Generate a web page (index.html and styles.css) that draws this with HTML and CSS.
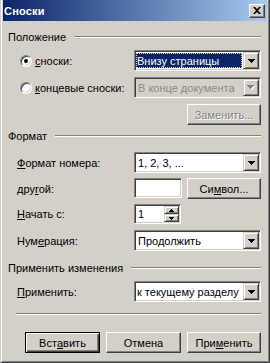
FILE: index.html
```html
<!DOCTYPE html>
<html lang="ru">
<head>
  <meta charset="UTF-8" />
  <title>Сноски</title>
  <link rel="stylesheet" href="styles.css">
</head>
<body>
<div class="window">
  <div class="titlebar">
    <span class="title">Сноски</span>
    <span class="close-btn">
      <svg width="8" height="7" viewBox="0 0 8 7"><path d="M0 0h2l2 2l2-2h2l-3 3.5l3 3.5h-2l-2-2l-2 2h-2l3-3.5z" fill="#000"/></svg>
    </span>
  </div>

  <div class="content">
    <div class="group-head head-pos"><span>Положение</span><i class="rule"></i></div>

    <div class="row row-1">
      <label class="radio"><span class="radio-box on"></span><span><u>с</u>носки:</span></label>
      <div class="combo">
        <span class="combo-text selected">Внизу страницы</span>
        <span class="drop"><svg width="7" height="4"><path d="M0 0h7v1h-1v1h-1v1h-1v1h-1v-1h-1v-1h-1v-1h-1z" fill="#000"/></svg></span>
      </div>
    </div>

    <div class="row row-2">
      <label class="radio"><span class="radio-box"></span><span><u>к</u>онцевые сноски:</span></label>
      <div class="combo disabled">
        <span class="combo-text">В конце документа</span>
        <span class="drop"><svg width="8" height="5"><path d="M1 1h7v1h-1v1h-1v1h-1v1h-1v-1h-1v-1h-1v-1h-1z" fill="#fff"/><path d="M0 0h7v1h-1v1h-1v1h-1v1h-1v-1h-1v-1h-1v-1h-1z" fill="#808080"/></svg></span>
      </div>
    </div>

    <div class="row row-3">
      <span></span>
      <div class="btn-line"><span class="btn disabled">Заменить...</span></div>
    </div>

    <div class="group-head head-fmt"><span>Формат</span><i class="rule"></i></div>

    <div class="row row-4">
      <span class="lbl"><u>Ф</u>ормат номера:</span>
      <div class="combo">
        <span class="combo-text">1, 2, 3, ...</span>
        <span class="drop"><svg width="7" height="4"><path d="M0 0h7v1h-1v1h-1v1h-1v1h-1v-1h-1v-1h-1v-1h-1z" fill="#000"/></svg></span>
      </div>
    </div>

    <div class="row row-5">
      <span class="lbl">дру<u>г</u>ой:</span>
      <div class="btn-line between">
        <span class="textbox"></span>
        <span class="btn">Си<u>м</u>вол...</span>
      </div>
    </div>

    <div class="row row-6">
      <span class="lbl"><u>Н</u>ачать с:</span>
      <div class="spin">
        <span class="spin-text">1</span>
        <span class="spin-btns">
          <span class="spin-btn"><svg width="5" height="3"><path d="M2 0h1v1h1v1h1v1h-5v-1h1v-1h1z" fill="#000"/></svg></span>
          <span class="spin-btn"><svg width="5" height="3"><path d="M0 0h5v1h-1v1h-1v1h-1v-1h-1v-1h-1z" fill="#000"/></svg></span>
        </span>
      </div>
    </div>

    <div class="row row-7">
      <span class="lbl">Нум<u>е</u>рация:</span>
      <div class="combo">
        <span class="combo-text">Продолжить</span>
        <span class="drop"><svg width="7" height="4"><path d="M0 0h7v1h-1v1h-1v1h-1v1h-1v-1h-1v-1h-1v-1h-1z" fill="#000"/></svg></span>
      </div>
    </div>

    <div class="group-head head-apply"><span>Применить изменения</span><i class="rule"></i></div>

    <div class="row row-8">
      <span class="lbl"><u>П</u>рименить:</span>
      <div class="combo">
        <span class="combo-text tight">к текущему разделу</span>
        <span class="drop"><svg width="7" height="4"><path d="M0 0h7v1h-1v1h-1v1h-1v1h-1v-1h-1v-1h-1v-1h-1z" fill="#000"/></svg></span>
      </div>
    </div>

    <div class="separator"></div>

    <div class="actions">
      <span class="btn default">Вст<u>а</u>вить</span>
      <span class="btn">Отмена</span>
      <span class="btn">При<u>м</u>енить</span>
    </div>
  </div>
</div>
</body>
</html>
```

FILE: styles.css
```css
body {
  margin: 0;
  font-family: 'Liberation Sans', Arial, sans-serif;
  font-size: 11px;
  color: #000;
  background: #d4d0c8;
}
.window {
  width: 270px;
  height: 363px;
  box-sizing: border-box;
  background: #d4d0c8;
  border-left: 1px solid #d4d0c8;
  border-right: 1px solid #404040;
  border-bottom: 1px solid #404040;
  box-shadow: inset 1px 0 0 #fff, inset -1px -1px 0 #808080;
  padding: 0 2px 2px 2px;
}
.titlebar {
  height: 21px;
  display: flex;
  align-items: center;
  justify-content: space-between;
  padding: 0 2px 0 1px;
  background: linear-gradient(to right, #0a246a, #a6caf0);
}
.title {
  color: #fff;
  font-weight: bold;
  font-size: 11px;
  letter-spacing: 0.2px;
}
.close-btn {
  width: 16px;
  height: 14px;
  box-sizing: border-box;
  display: flex;
  align-items: center;
  justify-content: center;
  background: #d4d0c8;
  border: 1px solid;
  border-color: #fff #404040 #404040 #fff;
  box-shadow: inset -1px -1px 0 #808080;
}
.content {
  padding: 0 6px 0 5px;
}
.group-head {
  display: flex;
  align-items: center;
  height: 14px;
}
.rule {
  flex: 1;
  height: 0;
  border-top: 1px solid #808080;
  border-bottom: 1px solid #fff;
  margin-left: 8px;
}
.head-pos { margin-top: 9px; }
.head-fmt { margin-top: 4px; }
.head-apply { margin-top: 10px; }

.row {
  display: grid;
  grid-template-columns: 126px 1fr;
  align-items: center;
  height: 21px;
}
.row-1 { margin-top: 6px; }
.row-2 { margin-top: 6px; }
.row-3 { margin-top: 6px; }
.row-4 { margin-top: 9px; }
.row-5 { margin-top: 5px; }
.row-6 { margin-top: 5px; height: 20px; }
.row-7 { margin-top: 6px; }
.row-8 { margin-top: 6px; }

.lbl {
  padding-left: 9px;
}
.radio {
  display: flex;
  align-items: center;
  gap: 3px;
  padding-left: 12px;
}
.radio-box {
  position: relative;
  width: 12px;
  height: 12px;
  box-sizing: border-box;
  border-radius: 50%;
  border: 1px solid;
  border-color: #808080 #fff #fff #808080;
  box-shadow: inset 1px 1px 0 #404040, inset -1px -1px 0 #d4d0c8;
  background: #fff;
}
.radio-box.on::after {
  content: "";
  position: absolute;
  left: 3px;
  top: 3px;
  width: 4px;
  height: 4px;
  border-radius: 50%;
  background: #000;
}

.combo {
  display: flex;
  height: 21px;
  box-sizing: border-box;
  border: 1px solid;
  border-color: #808080 #fff #fff #808080;
  box-shadow: inset 1px 1px 0 #404040, inset -1px -1px 0 #d4d0c8;
  padding: 1px;
  background: #fff;
}
.combo-text {
  flex: 1;
  display: flex;
  align-items: center;
  padding-left: 2px;
  white-space: nowrap;
  overflow: hidden;
}
.combo-text.tight {
  padding-left: 1px;
}
.combo-text.selected {
  margin: 1px 1px 1px 0;
  padding-left: 1px;
  background: #0a246a;
  color: #fff;
  outline: 1px dotted #e8d890;
  outline-offset: -1px;
}
.combo.disabled {
  background: #d4d0c8;
  color: #8a8a8a;
}
.drop {
  width: 16px;
  box-sizing: border-box;
  display: flex;
  align-items: center;
  justify-content: center;
  background: #d4d0c8;
  border: 1px solid;
  border-color: #d4d0c8 #404040 #404040 #d4d0c8;
  box-shadow: inset 1px 1px 0 #fff, inset -1px -1px 0 #808080;
}
.drop svg {
  display: block;
}

.btn-line {
  display: flex;
  justify-content: flex-end;
  height: 21px;
}
.btn-line.between {
  justify-content: space-between;
}
.btn {
  width: 74px;
  height: 21px;
  box-sizing: border-box;
  display: flex;
  align-items: center;
  justify-content: center;
  background: #d4d0c8;
  border: 1px solid;
  border-color: #fff #404040 #404040 #fff;
  box-shadow: inset -1px -1px 0 #808080;
}
.btn.disabled {
  color: #808080;
  text-shadow: 1px 1px 0 #fff;
}
.btn.default {
  border: 1px solid #000;
  box-shadow: inset 1px 1px 0 #fff, inset -1px -1px 0 #404040, inset -2px -2px 0 #808080;
}
.textbox {
  width: 48px;
  height: 20px;
  box-sizing: border-box;
  border: 1px solid;
  border-color: #808080 #fff #fff #808080;
  box-shadow: inset 1px 1px 0 #404040, inset -1px -1px 0 #d4d0c8;
  background: #fff;
}

.spin {
  display: flex;
  width: 47px;
  height: 20px;
  box-sizing: border-box;
  border: 1px solid;
  border-color: #808080 #fff #fff #808080;
  box-shadow: inset 1px 1px 0 #404040, inset -1px -1px 0 #d4d0c8;
  padding: 1px;
  background: #fff;
}
.spin-text {
  flex: 1;
  display: flex;
  align-items: center;
  padding-left: 2px;
}
.spin-btns {
  display: flex;
  flex-direction: column;
  width: 15px;
}
.spin-btn {
  flex: 1;
  display: flex;
  align-items: center;
  justify-content: center;
  box-sizing: border-box;
  background: #d4d0c8;
  border: 1px solid;
  border-color: #d4d0c8 #404040 #404040 #d4d0c8;
  box-shadow: inset 1px 1px 0 #fff, inset -1px -1px 0 #808080;
}
.spin-btn svg {
  display: block;
}

.separator {
  margin: 11px 0 0 8px;
  border-top: 1px solid #808080;
  border-bottom: 1px solid #fff;
}
.actions {
  display: flex;
  justify-content: flex-end;
  gap: 6px;
  margin-top: 17px;
}
.actions .btn {
  width: 75px;
}
.actions .btn:last-child {
  width: 74px;
}
```
